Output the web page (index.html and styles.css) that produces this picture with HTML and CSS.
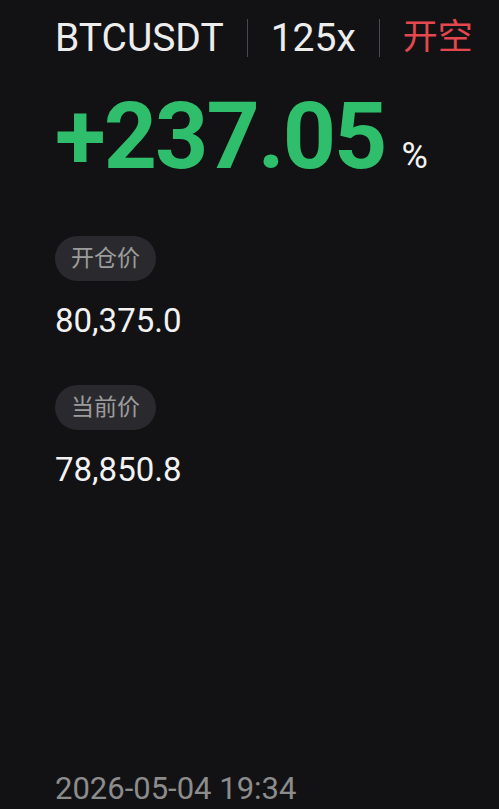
FILE: index.html
```html
<!DOCTYPE html>
<html lang="zh-CN">
<head>
    <meta charset="UTF-8">
    <meta name="viewport" content="width=device-width, initial-scale=1.0">
    <title>BTCUSDT 收益</title>
    <link rel="stylesheet" href="styles.css">
</head>
<body>
    <div class="card">
        <div class="head">
            <span class="symbol">BTCUSDT</span>
            <span class="sep"></span>
            <span class="lev">125x</span>
            <span class="sep"></span>
            <span class="side">开空</span>
        </div>

        <div class="roe">
            <span class="roe-num">+237.05</span>
            <span class="roe-unit">%</span>
        </div>

        <div class="field">
            <span class="pill">开仓价</span>
            <p class="price">80,375.0</p>
        </div>

        <div class="field">
            <span class="pill">当前价</span>
            <p class="price">78,850.8</p>
        </div>

        <p class="time">2026-05-04 19:34</p>
    </div>
</body>
</html>
```

FILE: styles.css
```css
body {
    margin: 0;
    background-color: #121214;
    color: #f2f2f2;
    font-family: Roboto, "Noto Sans CJK SC", sans-serif;
}
.card {
    display: flex;
    flex-direction: column;
    align-items: flex-start;
    height: 809px;
    box-sizing: border-box;
    padding: 16px 0 0 55px;
}
.head {
    display: flex;
    align-items: center;
    gap: 23px;
    font-size: 39px;
    line-height: 44px;
    color: #ededed;
}
.sep {
    width: 1px;
    height: 38px;
    background-color: #4a4a4e;
}
.side {
    font-size: 35px;
    color: #e5474f;
}
.roe {
    display: flex;
    align-items: baseline;
    margin-top: 22px;
}
.roe-num {
    font-size: 93px;
    font-weight: bold;
    line-height: 110px;
    color: #2fbf6c;
    letter-spacing: -2px;
}
.roe-unit {
    font-size: 36px;
    margin-left: 16px;
}
.field {
    margin-top: 44px;
}
.field + .field {
    margin-top: 46px;
}
.pill {
    display: inline-block;
    padding: 0 16px;
    height: 45px;
    line-height: 45px;
    border-radius: 23px;
    background-color: #2a2a2e;
    color: #9c9c9c;
    font-size: 23px;
}
.price {
    margin: 22px 0 0;
    font-size: 33px;
    line-height: 36px;
}
.time {
    margin: auto 0 4px;
    font-size: 31px;
    line-height: 32px;
    color: #8c8c8c;
}
```
